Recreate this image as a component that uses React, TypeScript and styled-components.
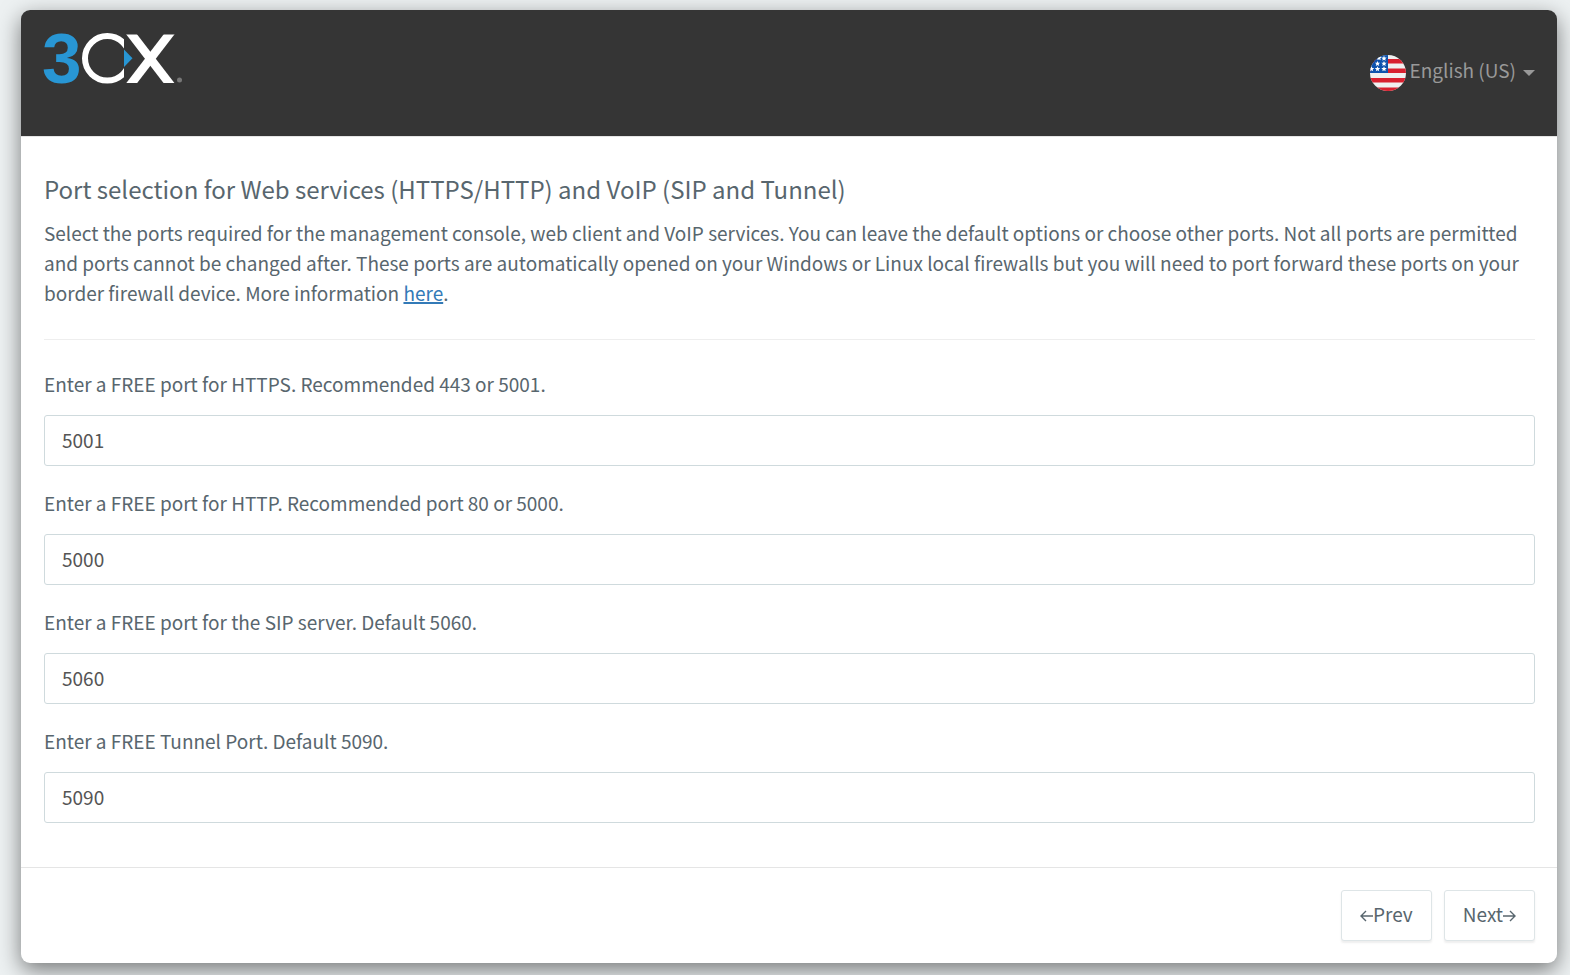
import React, { useState } from "react";
import styled, { createGlobalStyle } from "styled-components";

const GlobalStyle = createGlobalStyle`
  *, *::before, *::after { box-sizing: border-box; }
  body {
    margin: 0;
    background: #edf1f2;
    color: #58666e;
    font-family: "Source Sans Pro", "Noto Sans CJK SC", "Noto Sans", sans-serif;
    font-size: 19px;
    line-height: 30px;
  }
`;

const Page = styled.main`
  padding: 10px 13px 12px 21px;
`;

const Card = styled.form`
  background: #fff;
  border-radius: 9px;
  box-shadow: 0 7px 22px rgba(0, 0, 0, 0.5);
`;

const Header = styled.header`
  display: flex;
  justify-content: space-between;
  align-items: flex-start;
  height: 127px;
  padding: 22px 22px 22px 23px;
  background: #353535;
  border-bottom: 1px solid #e5e5e5;
  border-radius: 9px 9px 0 0;
`;

const LanguagePicker = styled.label`
  display: flex;
  align-items: center;
  gap: 4px;
  margin-top: 23px;
  color: #999;
`;

const LanguageSelect = styled.select`
  appearance: none;
  field-sizing: content;
  margin: 0 3px 0 0;
  padding: 0 0 6px;
  border: 0;
  background: transparent;
  color: inherit;
  font: inherit;
  cursor: pointer;
`;

const Body = styled.section`
  padding: 36px 22px 44px 23px;
`;

const Title = styled.h1`
  margin: 0 0 13px;
  font-size: 24px;
  line-height: 32px;
  font-weight: 400;
`;

const Intro = styled.p`
  margin: 0;
`;

const HelpLink = styled.a`
  color: #337ab7;
  text-decoration: underline;
  text-decoration-thickness: 2px;
`;

const Divider = styled.hr`
  margin: 31px 0 29px;
  border: 0;
  border-top: 1px solid #eee;
`;

const Fields = styled.div`
  display: grid;
  gap: 22px;
`;

const Field = styled.div`
  display: flex;
  flex-direction: column;
  gap: 16px;
`;

const PortInput = styled.input`
  width: 100%;
  height: 51px;
  padding: 8px 17px 10px;
  border: 1px solid #cfdadd;
  border-radius: 3px;
  background: #fff;
  color: #555;
  font: inherit;
`;

const Footer = styled.footer`
  display: flex;
  justify-content: flex-end;
  gap: 12px;
  padding: 22px;
  border-top: 1px solid #e5e5e5;
`;

const NavButton = styled.button`
  display: flex;
  align-items: center;
  height: 51px;
  padding: 0 18px 3px;
  border: 1px solid #dee5e7;
  border-radius: 3px;
  background: #fff;
  box-shadow: 0 2px 2px rgba(90, 90, 90, 0.1);
  color: #58666e;
  font: inherit;
  cursor: pointer;
`;

const Logo = () => (
  <svg width="140" height="54" viewBox="0 0 140 54" overflow="visible" role="img" aria-label="3CX">
    <defs>
      <clipPath id="ringCut">
        <rect x="36" y="0" width="44" height="54" />
      </clipPath>
      <clipPath id="crossCut">
        <rect x="80" y="2.5" width="54" height="48.5" />
      </clipPath>
    </defs>
    <text x="-2" y="51" fill="#2896d4" fontFamily="Liberation Sans, Arial, sans-serif" fontWeight="700" fontSize="71">3</text>
    <circle cx="63.300" cy="26.300" r="22.300" fill="none" stroke="#fff" strokeWidth="6" clipPath="url(#ringCut)" />
    <g stroke="#fff" strokeWidth="8.6" clipPath="url(#crossCut)">
      <line x1="83.9" y1="-2.5" x2="128.800" y2="56" />
      <line x1="128.800" y1="-2.5" x2="83.9" y2="56" />
    </g>
    <path d="M80 17.500 88.500 26.300 80 35Z" fill="#2896d4" />
    <circle cx="135.500" cy="48" r="2.500" fill="#777" />
  </svg>
);

const STARS = [
  [14, 3.5], [9, 3], [7.5, 8.7], [14, 8.7], [1.5, 14], [7.5, 14], [14, 14],
];

const Flag = () => (
  <svg width="36" height="36" viewBox="0 0 36 36" aria-hidden="true">
    <defs>
      <clipPath id="flagCircle">
        <circle cx="18" cy="18" r="18" />
      </clipPath>
    </defs>
    <g clipPath="url(#flagCircle)">
      <rect width="36" height="36" fill="#f0f0f0" />
      <path d="M0 4h36v4.500H0zM0 13.500h36v4.500H0zM0 23h36v4.500H0zM0 32.500h36V36H0z" fill="#d8202f" />
      <rect width="18" height="18" fill="#0d52ad" />
      {STARS.map(([x, y]) => (
        <path
          key={`${x}-${y}`}
          transform={`translate(${x} ${y})`}
          d="M0-2.700.8-.9 2.700-.9 1.200.4 1.700 2.300 0 1.200-1.700 2.300-1.200.4-2.700-.9-.8-.9Z"
          fill="#fff"
        />
      ))}
    </g>
  </svg>
);

const Caret = () => (
  <svg width="12" height="6" viewBox="0 0 12 6" aria-hidden="true">
    <path d="M0 0h12L6 6z" fill="#999" />
  </svg>
);

const Arrow = ({ forward = false }: { forward?: boolean }) => (
  <svg width="13" height="16" viewBox="0 0 13 16" fill="none" stroke="currentColor" strokeWidth="1.400" aria-hidden="true">
    <path d={forward ? "M0 10H12M7 5 12 10 7 15" : "M13 10H1M6 5 1 10 6 15"} />
  </svg>
);

const PORTS = [
  { id: "https", label: "Enter a FREE port for HTTPS. Recommended 443 or 5001.", value: "5001" },
  { id: "http", label: "Enter a FREE port for HTTP. Recommended port 80 or 5000.", value: "5000" },
  { id: "sip", label: "Enter a FREE port for the SIP server. Default 5060.", value: "5060" },
  { id: "tunnel", label: "Enter a FREE Tunnel Port. Default 5090.", value: "5090" },
];

export default function App() {
  const [ports, setPorts] = useState<Record<string, string>>(
    Object.fromEntries(PORTS.map((p) => [p.id, p.value]))
  );

  return (
    <>
      <GlobalStyle />
      <Page>
        <Card onSubmit={(e) => e.preventDefault()}>
          <Header>
            <Logo />
            <LanguagePicker>
              <Flag />
              <LanguageSelect aria-label="Language" defaultValue="en-US">
                <option value="en-US">English (US)</option>
              </LanguageSelect>
              <Caret />
            </LanguagePicker>
          </Header>
          <Body>
            <Title>Port selection for Web services (HTTPS/HTTP) and VoIP (SIP and Tunnel)</Title>
            <Intro>
              Select the ports required for the management console, web client and VoIP services. You can leave the
              default options or choose other ports. Not all ports are permitted and ports cannot be changed after.
              These ports are automatically opened on your Windows or Linux local firewalls but you will need to port
              forward these ports on your border firewall device. More information <HelpLink href="#ports">here</HelpLink>.
            </Intro>
            <Divider />
            <Fields>
              {PORTS.map((p) => (
                <Field key={p.id}>
                  <label htmlFor={p.id}>{p.label}</label>
                  <PortInput
                    id={p.id}
                    type="text"
                    inputMode="numeric"
                    value={ports[p.id]}
                    onChange={(e) => setPorts({ ...ports, [p.id]: e.target.value })}
                  />
                </Field>
              ))}
            </Fields>
          </Body>
          <Footer>
            <NavButton type="button">
              <Arrow />
              Prev
            </NavButton>
            <NavButton type="submit">
              Next
              <Arrow forward />
            </NavButton>
          </Footer>
        </Card>
      </Page>
    </>
  );
}
